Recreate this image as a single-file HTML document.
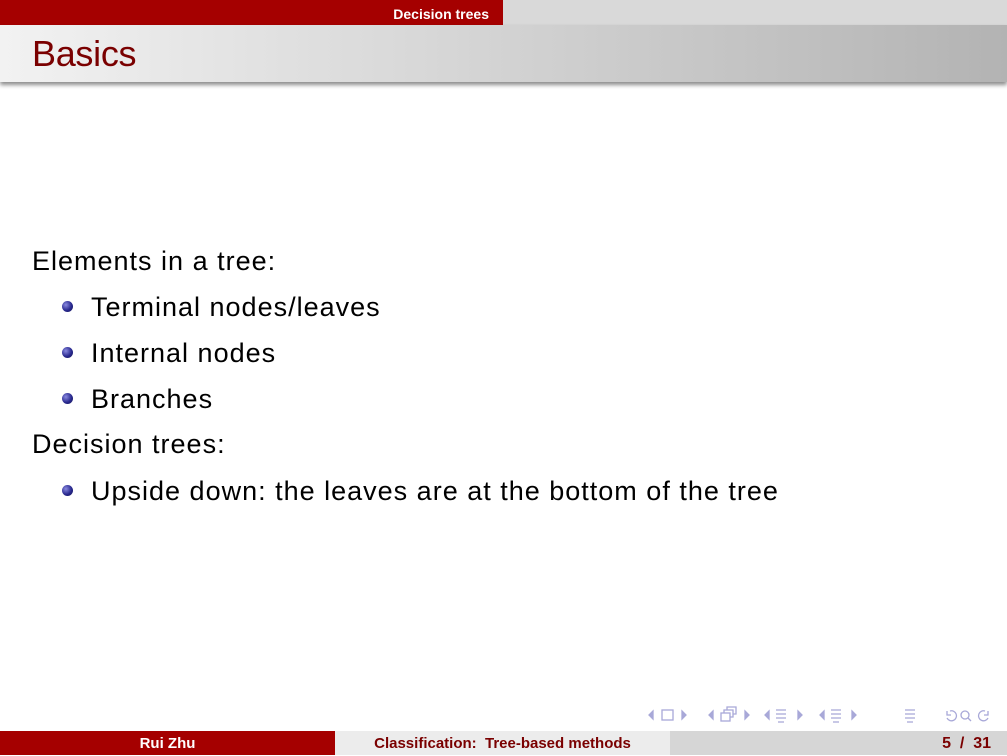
<!DOCTYPE html>
<html><head><meta charset="utf-8"><style>
html,body{margin:0;padding:0;}
body{width:1007px;height:755px;position:relative;overflow:hidden;background:#fff;font-family:"Liberation Sans",sans-serif;}
.top{position:absolute;left:0;top:0;width:1007px;height:25px;background:#d9d9d9;}
.topred{position:absolute;left:0;top:0;width:503px;height:25px;background:#a50000;color:#fff;font-weight:bold;font-size:14px;text-align:right;box-sizing:border-box;padding-right:14px;line-height:29px;}
.title{position:absolute;left:0;top:25px;width:1007px;height:57px;background:linear-gradient(to right,#f2f2f2,#b3b3b3);box-shadow:0 3px 4px rgba(0,0,0,0.45);}
.title span{position:absolute;left:32px;top:8px;font-size:36px;color:#7a0000;letter-spacing:-0.3px;}
.t{position:absolute;font-size:27px;letter-spacing:1px;color:#000;white-space:nowrap;line-height:30px;}
.b{position:absolute;width:11px;height:11px;border-radius:50%;background:radial-gradient(circle at 35% 35%,#8a8ae0,#2a2a90 55%,#111150);}
.f{position:absolute;top:731px;height:24px;font-weight:bold;font-size:15px;line-height:25px;text-align:center;}
.nav{position:absolute;left:645px;top:706px;}
</style></head><body>
<div class="top"></div>
<div class="topred">Decision trees</div>
<div class="title"><span>Basics</span></div>

<div class="t" style="left:32px;top:246px">Elements in a tree:</div>
<div class="b" style="left:62px;top:301px"></div><div class="t" style="left:91px;top:292px">Terminal nodes/leaves</div>
<div class="b" style="left:62px;top:347px"></div><div class="t" style="left:91px;top:338px">Internal nodes</div>
<div class="b" style="left:62px;top:393px"></div><div class="t" style="left:91px;top:384px">Branches</div>
<div class="t" style="left:32px;top:429px">Decision trees:</div>
<div class="b" style="left:62px;top:485px"></div><div class="t" style="left:91px;top:476px">Upside down: the leaves are at the bottom of the tree</div>

<svg class="nav" width="360" height="20" viewBox="0 0 360 20" fill="none" stroke="#a8a8d8" stroke-width="1.3">
<path d="M8 5 L4 9 L8 13Z" fill="#a8a8d8"/><rect x="17" y="4" width="11" height="10"/><path d="M37 5 L41 9 L37 13Z" fill="#a8a8d8"/>
<path d="M68 5 L64 9 L68 13Z" fill="#a8a8d8"/><rect x="76" y="7" width="9" height="8"/><path d="M79 7 V4 H88 V11 H85 M82 4 V1 H91 V8 H88"/><path d="M100 5 L104 9 L100 13Z" fill="#a8a8d8"/>
<path d="M124 5 L120 9 L124 13Z" fill="#a8a8d8"/><path d="M131 4 H141 M131 8 H141 M131 12 H141 M133 16 H139"/><path d="M153 5 L157 9 L153 13Z" fill="#a8a8d8"/>
<path d="M179 5 L175 9 L179 13Z" fill="#a8a8d8"/><path d="M186 4 H196 M186 8 H196 M186 12 H196 M188 16 H194"/><path d="M207 5 L211 9 L207 13Z" fill="#a8a8d8"/>
<path d="M260 4 H270 M260 8 H270 M260 12 H270 M262 16 H268"/>
<path d="M305 5 A5 5 0 1 1 302 12 M302 5 V9 H306"/><circle cx="320" cy="9" r="4"/><path d="M323 12 L326 15"/><path d="M340 5 A5 5 0 1 0 343 12 M343 5 V9 H339"/>
</svg>

<div class="f" style="left:0;width:335px;background:#a50000;color:#fff;">Rui Zhu</div>
<div class="f" style="left:335px;width:335px;background:#ececec;color:#7a0000;">Classification:&nbsp; Tree-based methods</div>
<div class="f" style="left:670px;width:337px;background:#d6d6d6;color:#7a0000;text-align:right;box-sizing:border-box;padding-right:16px;font-size:16px;">5 &nbsp;/&nbsp; 31</div>
</body></html>
